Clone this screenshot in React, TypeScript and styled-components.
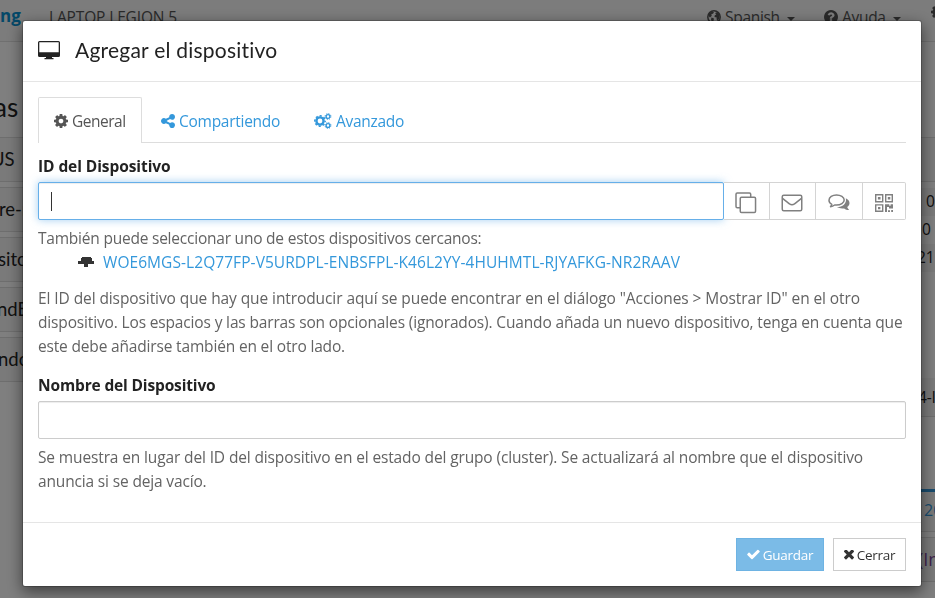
import React from 'react';
import styled, { createGlobalStyle } from 'styled-components';

const GlobalStyle = createGlobalStyle`
  * { box-sizing: border-box; }
  body {
    margin: 0;
    overflow: hidden;
    background: #fff;
    font-family: "Open Sans", "Noto Sans", sans-serif;
    font-size: 15.5px;
    line-height: 24px;
    color: #222;
  }
`;

/* ---------- page behind the dialog ---------- */

const Page = styled.div`
  height: 598px;
  overflow: hidden;
  display: flex;
  flex-direction: column;
`;

const Navbar = styled.header`
  display: flex;
  align-items: flex-start;
  height: 42px;
  flex: none;
  padding-top: 5px;
  background: #f8f8f8;
  border-bottom: 1px solid #e0e0e0;
  white-space: nowrap;
  color: #555;
`;

const Brand = styled.div`
  width: 49px;
  margin-top: -1px;
  font: bold 17px/24px "Open Sans", sans-serif;
  color: #0891d1;
`;

const DeviceName = styled.div`
  flex: 1;
  letter-spacing: -0.14px;
`;

const NavItem = styled.div<{ $width: number }>`
  display: flex;
  align-items: center;
  gap: 4px;
  flex: none;
  width: ${p => p.$width}px;
  letter-spacing: -0.3px;
  svg { flex: none; }
`;

const Caret = styled.span`
  margin: 3px 0 0 3px;
  border: 4px solid transparent;
  border-top-color: currentColor;
  border-bottom: 0;
`;

const Columns = styled.div`
  display: flex;
  justify-content: space-between;
  flex: 1;
`;

const LeftColumn = styled.section`
  width: 60px;
  overflow: hidden;
`;

const RightColumn = styled.section`
  width: 60px;
  padding-top: 95px;
  overflow: hidden;
`;

const Heading = styled.h3`
  margin: 50px 0 29px;
  height: 16px;
  font: 26px/30px Lato, sans-serif;
  text-indent: -6px;
`;

const Folder = styled.div<{ $shift: number }>`
  height: 45px;
  margin-bottom: 5px;
  border: 1px solid #ddd;
  border-width: 1px 0;
  background: #f5f5f5;
  font: 18.5px/43px Lato, sans-serif;
  white-space: nowrap;
  text-indent: ${p => p.$shift}px;
`;

const RightHeader = styled.div`
  height: 45px;
  margin-bottom: 6px;
  border: 1px solid #ddd;
  border-width: 1px 0;
  background: #f5f5f5;
`;

const Stat = styled.div<{ $pad: number; $striped?: boolean }>`
  height: 28px;
  padding-left: ${p => p.$pad}px;
  line-height: 27px;
  background: ${p => (p.$striped ? '#f5f5f5' : '#fff')};
`;

const Identity = styled.div`
  height: 39px;
  margin-top: 106px;
  padding-left: 43px;
  background: #f5f5f5;
  border-bottom: 1px solid #ddd;
  line-height: 38px;
  white-space: nowrap;
`;

const Progress = styled.div`
  height: 3px;
  margin-top: 72px;
  background: #3498db;
`;

const RemoteDevice = styled.div`
  height: 40px;
  padding-left: 49px;
  background: #f5f5f5;
  border-bottom: 1px solid #ddd;
  font: 16px/37px "Open Sans", sans-serif;
  color: #3498db;
`;

const RemoteNote = styled.div`
  height: 45px;
  margin-top: 5px;
  padding-left: 43px;
  border: 1px solid #ddd;
  border-width: 1px 0;
  background: #f5f5f5;
  font: 18px/43px "Open Sans", sans-serif;
  color: #7d4a9c;
  white-space: nowrap;
`;

/* ---------- dialog ---------- */

const Backdrop = styled.div`
  position: fixed;
  inset: 0;
  display: flex;
  justify-content: center;
  align-items: flex-start;
  padding: 20px 0 0 9px;
  background: rgba(0, 0, 0, 0.5);
`;

const Dialog = styled.main`
  width: 900px;
  height: 567px;
  display: flex;
  flex-direction: column;
  border: 1px solid rgba(0, 0, 0, 0.2);
  border-radius: 3px;
  background: #fff;
  background-clip: padding-box;
  box-shadow: 0 5px 15px rgba(0, 0, 0, 0.5);
`;

const DialogHeader = styled.header`
  display: flex;
  align-items: center;
  height: 61px;
  flex: none;
  padding: 0 15px 2px;
  border-bottom: 1px solid #e5e5e5;
`;

const Title = styled.h1`
  margin: 0 0 0 15px;
  font: 21px/30px Lato, sans-serif;
  letter-spacing: 0.22px;
  color: #222;
`;

const Body = styled.div`
  flex: 1;
  padding: 15px 15px 0;
`;

const Tabs = styled.nav`
  display: flex;
  gap: 3px;
  height: 46px;
  margin-bottom: 11px;
  border-bottom: 1px solid #ddd;
`;

const Tab = styled.a<{ $active?: boolean; $width: number; $spacing: number }>`
  display: flex;
  align-items: center;
  width: ${p => p.$width}px;
  height: 46px;
  padding: 0 0 0 15px;
  border: 1px solid ${p => (p.$active ? '#ddd' : 'transparent')};
  border-bottom: 0;
  border-radius: 2px 2px 0 0;
  background: ${p => (p.$active ? '#fff' : 'transparent')};
  color: ${p => (p.$active ? '#555' : '#3498db')};
  letter-spacing: ${p => p.$spacing}px;
  svg { margin-right: 4px; flex: none; }
`;

const Label = styled.label<{ $spacing: number }>`
  display: block;
  margin-bottom: 4px;
  font-weight: 700;
  letter-spacing: ${p => p.$spacing}px;
`;

const InputGroup = styled.div`
  display: flex;
`;

const Field = styled.div<{ $focused?: boolean }>`
  display: flex;
  align-items: center;
  flex: 1;
  height: 38px;
  padding-left: 12px;
  border: 1px solid ${p => (p.$focused ? '#66afe9' : '#ccc')};
  border-radius: 2px;
  background: #fff;
  box-shadow: ${p =>
    p.$focused
      ? 'inset 0 1px 1px rgba(0,0,0,.075), 0 0 8px rgba(102,175,233,.6)'
      : 'inset 0 1px 1px rgba(0,0,0,.075)'};
`;

const TextCursor = styled.span`
  width: 1px;
  height: 19px;
  background: #333;
`;

const IconButton = styled.button<{ $width: number }>`
  display: flex;
  align-items: center;
  justify-content: center;
  width: ${p => p.$width}px;
  height: 38px;
  padding: 3px 1px 0 0;
  border: 1px solid #d4d4d4;
  border-left-width: 0;
  background: #fff;
  color: #808080;
  &:last-child { border-radius: 0 2px 2px 0; }
`;

const Help = styled.div<{ $top: number; $bottom?: number }>`
  margin: ${p => p.$top}px 0 ${p => p.$bottom ?? 0}px;
  color: #636363;
  white-space: nowrap;
`;

const Line = styled.div<{ $spacing: number }>`
  letter-spacing: ${p => p.$spacing}px;
`;

const Nearby = styled.div`
  display: flex;
  align-items: center;
  padding-left: 40px;
`;

const NearbyLink = styled.a`
  margin-left: 9px;
  color: #3498db;
  letter-spacing: 0.065px;
`;

const Footer = styled.footer`
  display: flex;
  justify-content: flex-end;
  gap: 9px;
  height: 64px;
  flex: none;
  padding: 15px 15px 0;
  border-top: 1px solid #e5e5e5;
`;

const Button = styled.button<{ $primary?: boolean }>`
  display: flex;
  align-items: center;
  justify-content: center;
  gap: 3px;
  width: ${p => (p.$primary ? 88 : 73)}px;
  height: 33px;
  padding: 0;
  border: 1px solid ${p => (p.$primary ? '#6eb3e3' : '#ccc')};
  background: ${p => (p.$primary ? '#7bbbe7' : '#fff')};
  color: ${p => (p.$primary ? '#fff' : '#333')};
  font: 13.5px/20px "Open Sans", sans-serif;
  letter-spacing: -0.27px;
`;

/* ---------- icons ---------- */

const glyphs = {
  cog: 'M1152 896q0-106-75-181t-181-75-181 75-75 181 75 181 181 75 181-75 75-181zm512-109v222q0 12-8 23t-20 13l-185 28q-19 54-39 91 35 50 107 138 10 12 10 25t-9 23q-27 37-99 108t-94 71q-12 0-26-9l-138-108q-44 23-91 38-16 136-29 186-7 28-36 28h-222q-14 0-24.5-8.5t-11.5-21.5l-28-184q-49-16-90-37l-141 107q-10 9-25 9-14 0-25-11-126-114-165-168-7-10-7-23 0-12 8-23 15-21 51-66.5t54-70.5q-27-50-41-99l-183-27q-13-2-21-12.5t-8-23.5v-222q0-12 8-23t19-13l186-28q14-46 39-92-40-57-107-138-10-12-10-24 0-10 9-23 26-36 98.5-107.5t94.5-71.5q13 0 26 10l138 107q44-23 91-38 16-136 29-186 7-28 36-28h222q14 0 24.5 8.5t11.5 21.5l28 184q49 16 90 37l142-107q9-9 24-9 13 0 25 10 129 119 165 170 7 8 7 22 0 12-8 23-15 21-51 66.5t-54 70.5q26 50 41 98l183 28q13 2 21 12.5t8 23.5z',
  share: 'M1344 1024q133 0 226.5 93.5t93.5 226.5-93.5 226.5-226.5 93.5-226.5-93.5-93.5-226.5q0-12 2-34l-360-180q-92 86-218 86-133 0-226.5-93.5t-93.5-226.5 93.5-226.5 226.5-93.5q126 0 218 86l360-180q-2-22-2-34 0-133 93.5-226.5t226.5-93.5 226.5 93.5 93.5 226.5-93.5 226.5-226.5 93.5q-126 0-218-86l-360 180q2 22 2 34t-2 34l360 180q92-86 218-86z',
  check: 'M1671 566q0 40-28 68l-724 724-136 136q-28 28-68 28t-68-28l-136-136-362-362q-28-28-28-68t28-68l136-136q28-28 68-28t68 28l294 295 656-657q28-28 68-28t68 28l136 136q28 28 28 68z',
  times: 'M1490 1322q0 40-28 68l-136 136q-28 28-68 28t-68-28l-294-294-294 294q-28 28-68 28t-68-28l-136-136q-28-28-28-68t28-68l294-294-294-294q-28-28-28-68t28-68l136-136q28-28 68-28t68 28l294 294 294-294q28-28 68-28t68 28l136 136q28 28 28 68t-28 68l-294 294 294 294q28 28 28 68z',
  help: 'M1024 1376v-192q0-14-9-23t-23-9h-192q-14 0-23 9t-9 23v192q0 14 9 23t23 9h192q14 0 23-9t9-23zm256-672q0-88-55.5-163t-138.5-116-170-41q-243 0-371 213-15 24 8 42l132 100q7 6 19 6 16 0 25-12 53-68 86-92 34-24 86-24 48 0 85.5 26t37.5 59q0 38-20 61t-68 45q-63 28-115.5 86.5t-52.5 125.5v36q0 14 9 23t23 9h192q14 0 23-9t9-23q0-19 21.5-49.5t54.5-49.5q32-18 49-28.5t46-35 44.5-48 28-60.5 12.5-81zm384 192q0 209-103 385.5t-279.5 279.5-385.5 103-385.5-103-279.5-279.5-103-385.5 103-385.5 279.5-279.5 385.5-103 385.5 103 279.5 279.5 103 385.5z',
};

const Glyph = ({ name, size, crop = '128 128 1536 1536' }: { name: keyof typeof glyphs; size: number; crop?: string }) => (
  <svg width={size} height={size} viewBox={crop} fill="currentColor"><path d={glyphs[name]} /></svg>
);

const DesktopIcon = () => (
  <svg width="22" height="19" viewBox="0 0 22 19" fill="#222">
    <path fillRule="evenodd" d="M1.500 0h19A1.500 1.500 0 0 1 22 1.500v13A1.500 1.500 0 0 1 20.500 16H14v1h1.500v1.200h-9V17H8v-1H1.500A1.500 1.500 0 0 1 0 14.500v-13A1.500 1.500 0 0 1 1.500 0zM1.300 1.300v9.900h19.400V1.300z" />
  </svg>
);

const CogsIcon = () => (
  <svg width="18" height="16" viewBox="0 0 18 16" fill="none" stroke="currentColor">
    <circle cx="6" cy="8" r="3.600" strokeWidth="2.400" />
    <circle cx="6" cy="8" r="5.200" strokeWidth="1.500" strokeDasharray="2.100 1.984" strokeDashoffset="1" />
    <circle cx="14" cy="3.500" r="1.900" strokeWidth="1.400" />
    <circle cx="14" cy="3.500" r="2.900" strokeWidth="1" strokeDasharray="1.200 1.078" />
    <circle cx="14" cy="12.500" r="1.900" strokeWidth="1.400" />
    <circle cx="14" cy="12.500" r="2.900" strokeWidth="1" strokeDasharray="1.200 1.078" />
  </svg>
);

const GlobeIcon = () => (
  <svg width="14" height="14" viewBox="0 0 14 14">
    <circle cx="7" cy="7" r="6.200" fill="none" stroke="currentColor" strokeWidth="1.500" />
    <path fill="currentColor" d="M5 1.500l2 .8-.8 1.200-2 1 .6 1.200L3 7.500 1.500 6 2 3.500zM8 3l2.500-1 2 2.500v3.500l-2 3-1-2 .3-1.500L7.500 7l.3-1.800 1.500-.8zM4.500 7.500L7 8.500 6.500 11l-1.500 1.500-1-3z" />
  </svg>
);

const CloneIcon = () => (
  <svg width="22" height="22" viewBox="0 0 22 22" fill="none" stroke="currentColor" strokeWidth="1.500">
    <rect x="5.250" y="5.250" width="15.300" height="15.300" rx="1.200" />
    <path d="M5.200 15.700H2.200A1.200 1.200 0 0 1 1 14.500V2.200A1.200 1.200 0 0 1 2.200 1h12.300a1.200 1.200 0 0 1 1.200 1.200v3" />
  </svg>
);

const EnvelopeIcon = () => (
  <svg width="22" height="18" viewBox="0 0 22 18" fill="none" stroke="currentColor" strokeWidth="1.500">
    <rect x="1.250" y="1.250" width="19.500" height="15.500" rx="1.500" />
    <path d="M1.500 4.200c2.500 2.300 5 4 7 5.700 1.800 1.300 3.200 1.300 5 0 2-1.700 4.500-3.400 7-5.700" />
  </svg>
);

const CommentsIcon = () => (
  <svg width="22" height="18" viewBox="0 0 22 18">
    <path fill="currentColor" d="M17.800 4.200c2.300 1 3.700 2.700 3.700 4.800 0 1.700-.8 3-2.300 4.100.3 1.200 1.100 1.900 2 2.900-2 .1-3.700-.6-5-1.600-2.900.4-5.500-.1-7.300-1.300 5.600-.1 10.200-3.600 8.900-8.900z" />
    <path fill="#fff" stroke="currentColor" strokeWidth="1.500" strokeLinejoin="round" d="M8.500 1C4.400 1 1 3.200 1 6.200c0 1.700 1.100 3.200 2.800 4.100-.2 1-.8 1.700-1.300 2.400 1.700-.3 3-.9 4.100-1.700.6.100 1.200.1 1.900.1 4.200 0 7.700-2.100 7.700-5S12.700 1 8.500 1z" />
  </svg>
);

const QrIcon = () => (
  <svg width="18" height="18" viewBox="0 0 18 18" fill="none" stroke="currentColor" strokeWidth="1.400">
    <path d="M.7.7h7v7h-7zM10.700.7h6.600v7h-6.600zM.7 10.900h7v6.400h-7z" />
    <path fill="currentColor" stroke="none" d="M2.900 2.900h2.600v2.600H2.900zM12.800 2.900h2.500v2.600h-2.500zM3 13h2.400v2.200H3zM10 10.200h4.300v1.600h1.300v-1.600H18v4.300h-4v-1.400h-2V18h-2zM13 16.300h2V18h-2zM16.200 16h1.800v2h-1.800z" />
  </svg>
);

const NearbyIcon = () => (
  <svg width="16" height="10" viewBox="0 0 16 10" fill="#333">
    <path d="M4 0h9v1h1v3h2v3h-6v3H6V7H0V4h3V1h1z" />
  </svg>
);

export default function App() {
  return (
    <>
      <GlobalStyle />
      <Page>
        <Navbar>
          <Brand>ng</Brand>
          <DeviceName>LAPTOP LEGION 5</DeviceName>
          <NavItem $width={117}><GlobeIcon />Spanish<Caret /></NavItem>
          <NavItem $width={107}><Glyph name="help" size={14} />Ayuda<Caret /></NavItem>
          <NavItem $width={4}><Glyph name="cog" size={14} /></NavItem>
        </Navbar>
        <Columns>
          <LeftColumn>
            <Heading>as</Heading>
            <Folder $shift={-9}>US</Folder>
            <Folder $shift={-1}>re-r</Folder>
            <Folder $shift={-2}>sito</Folder>
            <Folder $shift={-3}>ndE</Folder>
            <Folder $shift={-2}>ndo</Folder>
          </LeftColumn>
          <RightColumn>
            <RightHeader />
            <Stat $pad={51} $striped>0</Stat>
            <Stat $pad={47}>0</Stat>
            <Stat $pad={42} $striped>21</Stat>
            <Identity>4-l</Identity>
            <Progress />
            <RemoteDevice>20</RemoteDevice>
            <RemoteNote>(In</RemoteNote>
          </RightColumn>
        </Columns>
      </Page>
      <Backdrop>
        <Dialog>
          <DialogHeader>
            <DesktopIcon />
            <Title>Agregar el dispositivo</Title>
          </DialogHeader>
          <Body>
            <Tabs>
              <Tab $active $width={104} $spacing={-0.5}><Glyph name="cog" size={14} />General</Tab>
              <Tab $width={150} $spacing={-0.27}><Glyph name="share" size={14} />Compartiendo</Tab>
              <Tab $width={130} $spacing={-0.28}><CogsIcon />Avanzado</Tab>
            </Tabs>
            <Label $spacing={-0.08}>ID del Dispositivo</Label>
            <InputGroup>
              <Field $focused><TextCursor /></Field>
              <IconButton $width={46}><CloneIcon /></IconButton>
              <IconButton $width={46}><EnvelopeIcon /></IconButton>
              <IconButton $width={47}><CommentsIcon /></IconButton>
              <IconButton $width={43}><QrIcon /></IconButton>
            </InputGroup>
            <Help $top={6} $bottom={12}>
              <Line $spacing={-0.219}>También puede seleccionar uno de estos dispositivos cercanos:</Line>
              <Nearby>
                <NearbyIcon />
                <NearbyLink>WOE6MGS-L2Q77FP-V5URDPL-ENBSFPL-K46L2YY-4HUHMTL-RJYAFKG-NR2RAAV</NearbyLink>
              </Nearby>
            </Help>
            <Help $top={0} $bottom={15}>
              <Line $spacing={-0.088}>El ID del dispositivo que hay que introducir aquí se puede encontrar en el diálogo "Acciones &gt; Mostrar ID" en el otro</Line>
              <Line $spacing={-0.152}>dispositivo. Los espacios y las barras son opcionales (ignorados). Cuando añada un nuevo dispositivo, tenga en cuenta que</Line>
              <Line $spacing={-0.169}>este debe añadirse también en el otro lado.</Line>
            </Help>
            <Label $spacing={-0.15}>Nombre del Dispositivo</Label>
            <Field />
            <Help $top={6}>
              <Line $spacing={-0.132}>Se muestra en lugar del ID del dispositivo en el estado del grupo (cluster). Se actualizará al nombre que el dispositivo</Line>
              <Line $spacing={-0.155}>anuncia si se deja vacío.</Line>
            </Help>
          </Body>
          <Footer>
            <Button $primary><Glyph name="check" size={13} crop="100 160 1600 1536" />Guardar</Button>
            <Button><Glyph name="times" size={10} crop="302 434 1188 1188" />Cerrar</Button>
          </Footer>
        </Dialog>
      </Backdrop>
    </>
  );
}
